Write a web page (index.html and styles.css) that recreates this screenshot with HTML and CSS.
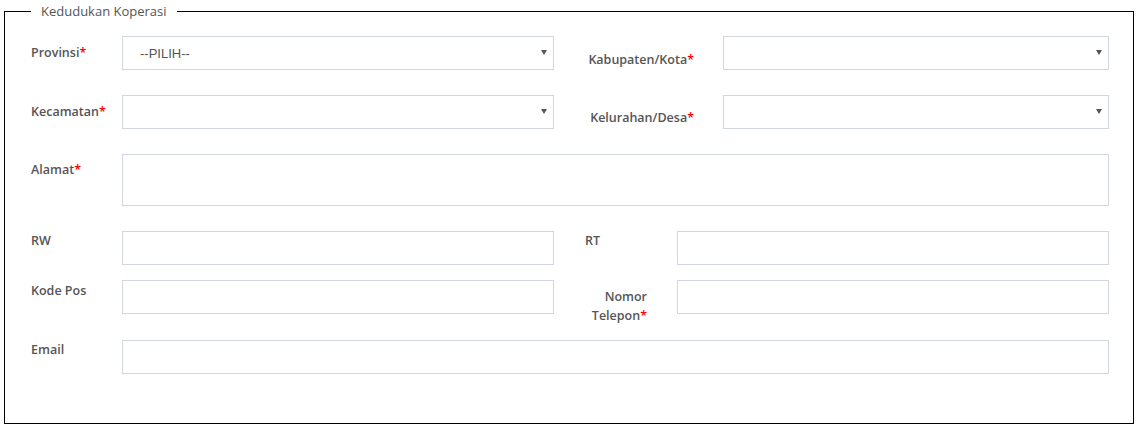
FILE: index.html
```html
<!DOCTYPE html>
<html lang="id">
<head>
<meta charset="utf-8">
<title>Kedudukan Koperasi</title>
<link rel="stylesheet" href="styles.css">
</head>
<body>
<div class="page">
  <fieldset class="box">
    <legend class="box-title">Kedudukan Koperasi</legend>
    <div class="body">
      <div class="row row-sel">
        <label class="lbl pt7">Provinsi<span class="req">*</span></label>
        <div class="sel"><select class="ctl"><option>--PILIH--</option></select></div>
        <label class="lbl lbl-r pt14">Kabupaten/Kota<span class="req">*</span></label>
        <div class="sel"><select class="ctl"><option></option></select></div>
      </div>
      <div class="row row-sel">
        <label class="lbl pt7">Kecamatan<span class="req">*</span></label>
        <div class="sel"><select class="ctl"><option></option></select></div>
        <label class="lbl lbl-r pt13">Kelurahan/Desa<span class="req">*</span></label>
        <div class="sel"><select class="ctl"><option></option></select></div>
      </div>
      <div class="row row-wide">
        <label class="lbl pt6">Alamat<span class="req">*</span></label>
        <textarea class="ctl area"></textarea>
      </div>
      <div class="row row-half gap-s">
        <label class="lbl pt0">RW</label>
        <input class="ctl" type="text">
        <label class="lbl lbl-m pt0">RT</label>
        <input class="ctl" type="text">
      </div>
      <div class="row row-half gap-s">
        <label class="lbl pt1">Kode Pos</label>
        <input class="ctl" type="text">
        <label class="lbl lbl-m lbl-mr pt7">Nomor Telepon<span class="req">*</span></label>
        <input class="ctl" type="text">
      </div>
      <div class="row row-wide last">
        <label class="lbl pt0">Email</label>
        <input class="ctl" type="text">
      </div>
    </div>
  </fieldset>
</div>
</body>
</html>
```
FILE: styles.css
```css
html, body {
  margin: 0;
  padding: 0;
  background: #fff;
}
body {
  width: 1139px;
  height: 428px;
  overflow: hidden;
  font-family: "Open Sans", "Liberation Sans", sans-serif;
}
.page {
  padding: 2px 5px 0 4px;
}
.box {
  margin: 0;
  padding: 0;
  border: 1px solid #000;
  height: 422px;
  box-sizing: border-box;
}
.box-title {
  margin-left: 26px;
  padding: 0 10px;
  font-size: 13px;
  line-height: 18px;
  color: #555;
}
.body {
  padding: 16px 0 0 26px;
}
.row {
  display: grid;
  align-items: start;
  margin-bottom: 25px;
}
.row.gap-s {
  margin-bottom: 15px;
}
.row.last {
  margin-bottom: 0;
}
.row-sel {
  grid-template-columns: 91px 432px 169px 386px;
}
.row-half {
  grid-template-columns: 91px 432px 123px 432px;
}
.row-wide {
  grid-template-columns: 91px 987px;
}
.lbl {
  font-size: 12.5px;
  font-weight: 600;
  line-height: 19px;
  color: #555;
}
.lbl-r {
  text-align: right;
  padding-right: 29px;
}
.lbl-m {
  padding-left: 31px;
  padding-right: 30px;
}
.lbl-mr {
  text-align: right;
}
.pt0 { padding-top: 0; }
.pt1 { padding-top: 1px; }
.pt6 { padding-top: 6px; }
.pt7 { padding-top: 7px; }
.pt13 { padding-top: 13px; }
.pt14 { padding-top: 14px; }
.req {
  color: #f00;
}
.ctl {
  display: block;
  box-sizing: border-box;
  width: 100%;
  height: 34px;
  margin: 0;
  border: 1px solid #d2d6de;
  border-radius: 0;
  background: #fff;
  outline: none;
  font-family: "Liberation Sans", Arial, sans-serif;
  font-size: 13px;
  color: #555;
  padding: 0 0 0 17px;
}
.area {
  height: 52px;
  resize: none;
}
.sel {
  position: relative;
}
.sel select {
  appearance: none;
  -webkit-appearance: none;
}
.sel::after {
  content: "";
  position: absolute;
  right: 7px;
  top: 14px;
  width: 0;
  height: 0;
  border-left: 3px solid transparent;
  border-right: 3px solid transparent;
  border-top: 5px solid #555;
  pointer-events: none;
}
```
